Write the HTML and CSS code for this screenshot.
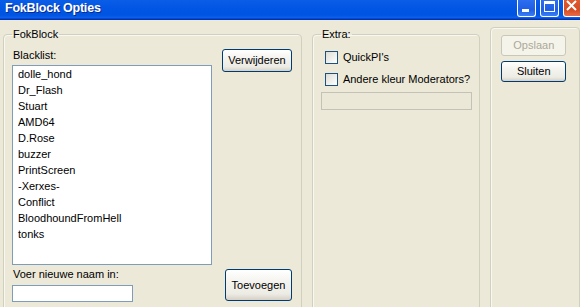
FILE: index.html
```html
<!DOCTYPE html>
<html>
<head>
<meta charset="utf-8">
<link rel="stylesheet" href="styles.css">
</head>
<body>
<div class="window">
  <div class="titlebar">
    <span class="title">FokBlock Opties</span>
    <div class="tb-buttons">
      <span class="tb-btn"><svg width="19" height="17" viewBox="0 0 19 17"><rect x="5" y="10" width="7" height="3" fill="#fff"/></svg></span>
      <span class="tb-btn"><svg width="19" height="17" viewBox="0 0 19 17"><rect x="4.5" y="2.5" width="10" height="10" fill="none" stroke="#fff"/><rect x="4" y="2" width="11" height="3" fill="#fff"/></svg></span>
      <span class="tb-btn close"><svg width="17" height="17" viewBox="0 0 17 17"><path d="M4 2 L13 11 M13 2 L4 11" stroke="#fff" stroke-width="2" fill="none"/></svg></span>
    </div>
  </div>
  <div class="content">
    <fieldset class="group fok">
      <legend>FokBlock</legend>
      <div class="fok-inner">
        <div class="fok-left">
          <div class="lbl">Blacklist:</div>
          <ul class="listbox">
            <li>dolle_hond</li>
            <li>Dr_Flash</li>
            <li>Stuart</li>
            <li>AMD64</li>
            <li>D.Rose</li>
            <li>buzzer</li>
            <li>PrintScreen</li>
            <li>-Xerxes-</li>
            <li>Conflict</li>
            <li>BloodhoundFromHell</li>
            <li>tonks</li>
          </ul>
          <div class="lbl lbl-new">Voer nieuwe naam in:</div>
          <div class="textbox"></div>
        </div>
        <div class="fok-right">
          <button class="btn btn-del">Verwijderen</button>
          <button class="btn btn-add">Toevoegen</button>
        </div>
      </div>
    </fieldset>
    <fieldset class="group extra">
      <legend>Extra:</legend>
      <label class="check"><span class="cb"></span>QuickPI's</label>
      <label class="check"><span class="cb"></span>Andere kleur Moderators?</label>
      <div class="textbox disabled"></div>
    </fieldset>
    <fieldset class="group actions">
      <button class="btn btn-save" disabled>Opslaan</button>
      <button class="btn btn-close">Sluiten</button>
    </fieldset>
  </div>
</div>
</body>
</html>
```
FILE: styles.css
```css
html, body {
  margin: 0;
  padding: 0;
}
body {
  background: #ECE9D8;
  font-family: "Liberation Sans", Arial, sans-serif;
  font-size: 11px;
  color: #000;
  width: 580px;
  height: 307px;
  overflow: hidden;
}
.window {
  width: 580px;
  height: 307px;
  overflow: hidden;
}
.titlebar {
  height: 20px;
  background: linear-gradient(#0A5DE6 0%, #0256E4 40%, #0054E2 75%, #0B5FEA 88%, #003CC8 95%, #0028A0 100%);
  display: flex;
  align-items: flex-start;
  justify-content: space-between;
}
.title {
  color: #fff;
  font-weight: bold;
  font-size: 12.5px;
  letter-spacing: -0.2px;
  line-height: 15px;
  padding: 1px 0 0 5px;
  text-shadow: 1px 1px 0 #0A2A8E;
}
.tb-buttons {
  display: flex;
  gap: 4px;
  margin-right: -2px;
}
.tb-btn {
  width: 19px;
  height: 17px;
  box-sizing: border-box;
  border: 1px solid #fff;
  border-top: none;
  border-radius: 0 0 3px 3px;
  background: linear-gradient(#2D6FF0, #1F5EE4 60%, #3A7EF2);
  display: block;
  overflow: hidden;
}
.tb-btn svg { display: block; margin: -1px 0 0 -1px; }
.tb-btn.close {
  width: 19px;
  background: linear-gradient(#E0592F, #D64B22 60%, #E96B45);
  border-radius: 0 0 0 3px;
}
.content {
  display: flex;
  align-items: flex-start;
  padding-left: 3px;
  gap: 10px;
}
.group {
  margin: 0;
  border: 1px solid #D0D0BF;
  border-radius: 4px;
  min-width: 0;
  box-sizing: border-box;
  box-shadow: inset 1px 1px 0 #F8F7F1;
}
.group legend {
  padding: 0 1px;
  line-height: 13px;
  color: #000;
}
.fok {
  margin-top: 8px;
  width: 300px;
  height: 300px;
  padding: 8px 0 0 8px;
}
.fok-inner {
  display: flex;
}
.fok-left {
  width: 200px;
  display: flex;
  flex-direction: column;
}
.lbl {
  line-height: 13px;
  padding-left: 1px;
}
.listbox {
  list-style: none;
  margin: 3px 0 0 0;
  padding: 0 0 0 5px;
  height: 200px;
  box-sizing: border-box;
  border: 1px solid #7F9DB9;
  background: #fff;
}
.listbox li {
  line-height: 16px;
}
.lbl-new {
  margin-top: 3px;
}
.textbox {
  margin-top: 4px;
  width: 121px;
  height: 17px;
  box-sizing: border-box;
  border: 1px solid #7F9DB9;
  background: #fff;
}
.textbox.disabled {
  margin: 0;
  width: 151px;
  height: 18px;
  border-color: #C2C2B6;
  background: #EBE8D8;
}
.fok-right {
  margin-left: 10px;
  height: 252px;
  display: flex;
  flex-direction: column;
  justify-content: space-between;
  align-items: flex-start;
}
.btn {
  font-family: inherit;
  font-size: 11px;
  color: #000;
  box-sizing: border-box;
  border: 1px solid #003C74;
  border-radius: 3px;
  background: linear-gradient(#FFFFFF 0%, #F4F3EE 40%, #ECEBE4 80%, #D6D0C5 100%);
  padding: 0;
  margin: 0;
  line-height: 13px;
}
.btn-del {
  width: 70px;
  height: 23px;
}
.btn-add {
  width: 67px;
  height: 32px;
  margin-left: 3px;
}
.extra {
  margin-top: 8px;
  width: 169px;
  height: 300px;
  padding: 8px 0 0 8px;
}
.check {
  display: flex;
  align-items: center;
  height: 13px;
  margin: 2px 0 9px 4px;
  line-height: 13px;
}
.check + .check { margin: 0 0 6px 4px; }
.cb {
  width: 13px;
  height: 13px;
  box-sizing: border-box;
  border: 1px solid #1C5180;
  background: linear-gradient(135deg, #DCDCD7, #FFFFFF);
  margin-right: 5px;
  flex: none;
}
.actions {
  margin-top: 7px;
  width: 90px;
  height: 300px;
  padding: 7px 0 0 10px;
  display: flex;
  flex-direction: column;
  gap: 5px;
}
.btn-save, .btn-close {
  width: 65px;
  height: 21px;
}
.btn-save {
  border-color: #C9C7BA;
  background: #F5F4EA;
  color: #ACA899;
}
```
